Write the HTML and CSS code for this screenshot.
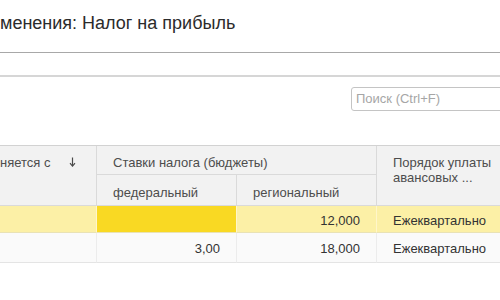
FILE: index.html
```html
<!DOCTYPE html>
<html lang="ru">
<head>
<meta charset="utf-8">
<link rel="stylesheet" href="styles.css">
</head>
<body>
<div class="page">
  <div class="title">менения: Налог на прибыль</div>
  <div class="rule-top"></div>
  <div class="band"></div>
  <div class="rule-bottom"></div>
  <div class="toolbar">
    <div class="search">Поиск (Ctrl+F)</div>
  </div>
  <table class="grid">
    <colgroup>
      <col class="c1"><col class="c2"><col class="c3"><col class="c4">
    </colgroup>
    <thead>
      <tr class="h1">
        <th rowspan="2" class="first"><div class="sortcell"><span>няется с</span><svg class="arrow" width="7" height="10" viewBox="0 0 7 10"><path d="M3.5 0.5V9" stroke="#4a4a4a" stroke-width="1.2" fill="none"/><path d="M1 6.2L3.5 9.2L6 6.2" stroke="#4a4a4a" stroke-width="1.1" fill="none"/></svg></div></th>
        <th colspan="2">Ставки налога (бюджеты)</th>
        <th rowspan="2" class="multi">Порядок уплаты<br>авансовых ...</th>
      </tr>
      <tr class="h2">
        <th>федеральный</th>
        <th>региональный</th>
      </tr>
    </thead>
    <tbody>
      <tr class="row sel">
        <td></td>
        <td class="cur num"></td>
        <td class="num">12,000</td>
        <td>Ежеквартально</td>
      </tr>
      <tr class="row">
        <td></td>
        <td class="num">3,00</td>
        <td class="num">18,000</td>
        <td>Ежеквартально</td>
      </tr>
    </tbody>
  </table>
</div>
</body>
</html>
```
FILE: styles.css
```css
html, body {
  margin: 0;
  padding: 0;
  background: #ffffff;
}
.page {
  width: 500px;
  height: 300px;
  overflow: hidden;
  font-family: "Liberation Sans", Arial, sans-serif;
  color: #333333;
}
.title {
  height: 52px;
  box-sizing: border-box;
  padding-top: 13px;
  font-size: 18px;
  line-height: 20px;
  color: #2b2b2b;
  white-space: nowrap;
}
.rule-top {
  height: 1px;
  background: #a8a8a8;
}
.band {
  height: 22px;
}
.rule-bottom {
  height: 2px;
  background: #d6d6d6;
}
.toolbar {
  height: 68px;
  box-sizing: border-box;
  padding-top: 10px;
  padding-left: 351px;
}
.search {
  width: 160px;
  height: 24px;
  box-sizing: border-box;
  border: 1px solid #c4c4c4;
  border-radius: 3px;
  padding-left: 4px;
  font-size: 13px;
  line-height: 22px;
  color: #a6a6a6;
  white-space: nowrap;
}
.grid {
  table-layout: fixed;
  border-collapse: separate;
  border-spacing: 0;
  width: 540px;
  font-size: 13px;
  border-top: 1px solid #d2d2d2;
}
.c1 { width: 97px; }
.c2 { width: 140px; }
.c3 { width: 140px; }
.c4 { width: 163px; }
th {
  background: #f2f2f2;
  color: #4d4d4d;
  font-weight: normal;
  text-align: left;
  vertical-align: top;
  padding: 0 0 0 16px;
  border-right: 1px solid #dadada;
  border-bottom: 1px solid #dadada;
  white-space: nowrap;
  overflow: hidden;
  line-height: 16px;
}
.h1 th {
  height: 29px;
  box-sizing: border-box;
  padding-top: 9px;
}
.h2 th {
  height: 31px;
  box-sizing: border-box;
  padding-top: 10px;
}
th.first {
  padding-left: 0;
}
.sortcell {
  display: flex;
  gap: 19px;
  align-items: center;
}
.arrow {
  display: block;
  margin-top: -3px;
}
th.multi {
  line-height: 15px;
}
td {
  height: 27px;
  box-sizing: border-box;
  padding: 2px 16px 0 16px;
  border-right: 1px solid #ececec;
  border-bottom: 1px solid #e4e4e4;
  white-space: nowrap;
  overflow: hidden;
  color: #333333;
  background: #fafafa;
}
.row + .row td {
  height: 30px;
}
td.num {
  text-align: right;
}
.sel td {
  background: #fcf0a6;
  border-right-color: #fff6c9;
  border-bottom-color: #e9e2b5;
}
.sel td.cur {
  background: #f9d923;
}
```
